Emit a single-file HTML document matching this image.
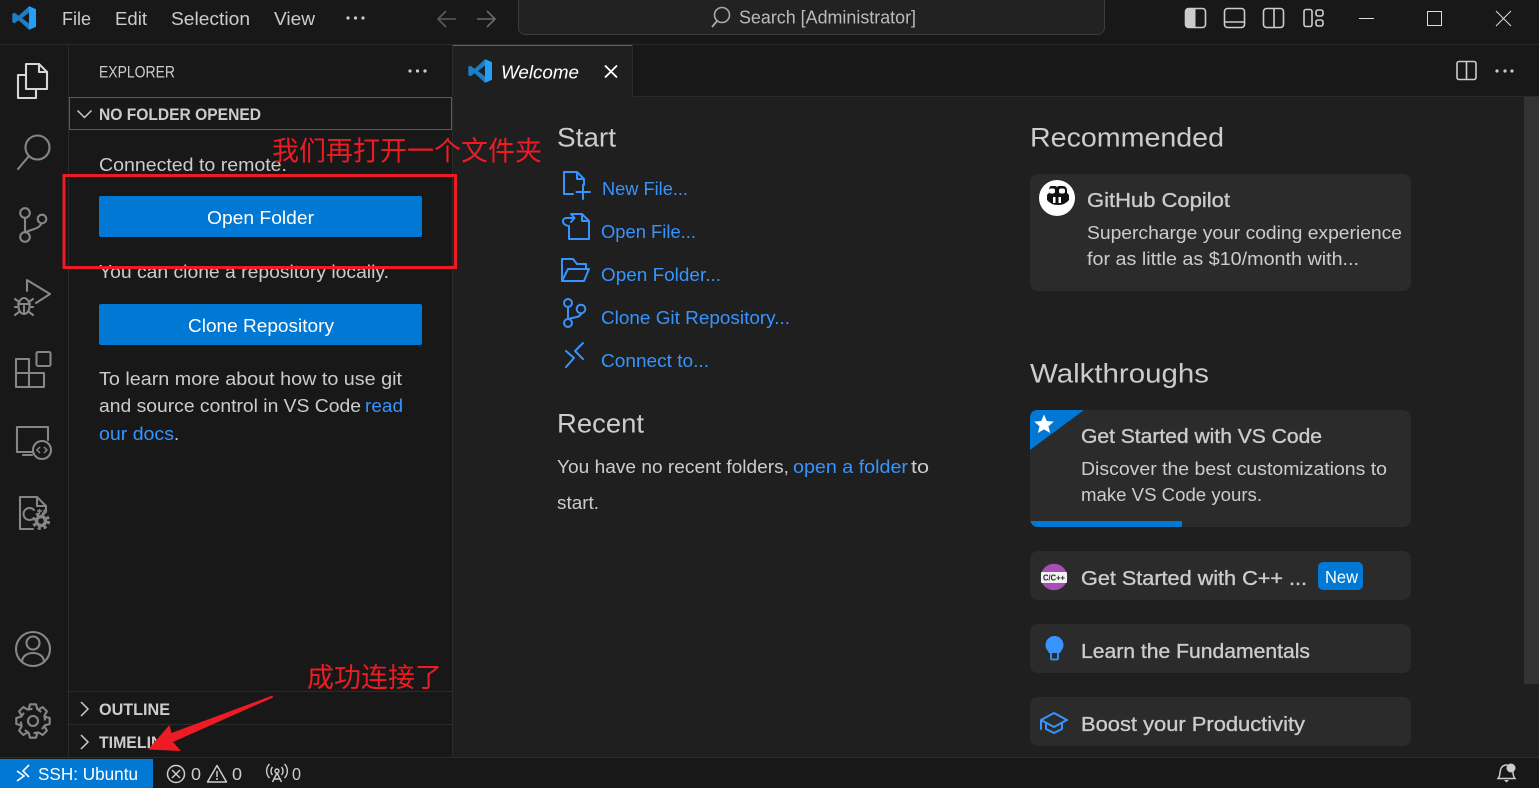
<!DOCTYPE html>
<html><head><meta charset="utf-8"><title>VS Code</title>
<style>
html,body{margin:0;padding:0;background:#181818;overflow:hidden}
svg{display:block}
text{font-family:"Liberation Sans","Noto Sans CJK SC",sans-serif;fill:#ccc;font-size:18.5px}
.t{font-size:18.5px;fill:#ccc}
.l{fill:#3794ff}
.h{font-size:27px;fill:#ccc}
.b{font-weight:bold;font-size:16.5px;fill:#ccc}
.s{font-size:20.5px;fill:#ccc;stroke:#ccc;stroke-width:.35}
.st{font-size:17.5px;fill:#ccc}
.a{stroke:#868686;stroke-width:2.1;fill:none;stroke-linejoin:round;stroke-linecap:round}
.w{stroke:#3794ff;stroke-width:2;fill:none;stroke-linejoin:round;stroke-linecap:round}
.z{font-size:27px;fill:#ed1c24;font-family:"Liberation Sans","Noto Sans CJK SC",sans-serif}
</style></head><body>
<svg xmlns="http://www.w3.org/2000/svg" width="1539" height="788" viewBox="0 0 1539 788">
<rect width="1539" height="788" fill="#181818"/>
<!-- editor -->
<rect x="453" y="97" width="1086" height="660" fill="#1f1f1f"/>
<rect x="1524" y="97" width="15" height="587" fill="#333"/>
<!-- lines -->
<rect x="0" y="44" width="1539" height="1" fill="#2b2b2b"/>
<rect x="68" y="45" width="1" height="712" fill="#2b2b2b"/>
<rect x="452" y="45" width="1" height="712" fill="#2b2b2b"/>
<rect x="453" y="96" width="1086" height="1" fill="#2b2b2b"/>
<rect x="0" y="757" width="1539" height="1" fill="#2b2b2b"/>
<rect x="69" y="691" width="383" height="1" fill="#2b2b2b"/>
<rect x="69" y="724" width="383" height="1" fill="#2b2b2b"/>

<!-- title logo -->
<g transform="translate(12,6)">
<path fill="#1a7fc8" d="M17 .3 6.600 9.800 2.400 6.600 .3 7.900v8.200l2.100 1.300 4.200-3.200L17 23.700l7-3V3.300zM17 6.600v10.800L10 12z" fill-rule="evenodd"/>
<path fill="#22a0f5" d="M17 .3l7 3V20.700l-7 3V17.400L17 6.600z"/>
</g>
<text x="62" y="25" textLength="29" lengthAdjust="spacingAndGlyphs">File</text>
<text x="115" y="25" textLength="32" lengthAdjust="spacingAndGlyphs">Edit</text>
<text x="171" y="25" textLength="79" lengthAdjust="spacingAndGlyphs">Selection</text>
<text x="274" y="25" textLength="41" lengthAdjust="spacingAndGlyphs">View</text>
<g fill="#ccc"><circle cx="348" cy="18" r="1.6"/><circle cx="355.500" cy="18" r="1.6"/><circle cx="363" cy="18" r="1.6"/></g>
<path d="M456 19H439M446 11l-8 8 8 8" stroke="#5a5a5a" stroke-width="1.6" fill="none"/>
<path d="M477 19H494M487 11l8 8-8 8" stroke="#6a6a6a" stroke-width="1.6" fill="none"/>
<rect x="518.500" y="-6" width="586" height="40.500" rx="7" fill="#222" stroke="#3c3c3c"/>
<circle cx="722" cy="15" r="7.500" fill="none" stroke="#aaa" stroke-width="1.600"/>
<path d="M717 21 712 27" stroke="#aaa" stroke-width="1.800"/>
<text x="739" y="23.500" textLength="177" lengthAdjust="spacingAndGlyphs" style="fill:#bbb">Search [Administrator]</text>
<!-- layout controls -->
<g fill="none" stroke="#ccc" stroke-width="1.600">
<rect x="1185.500" y="8.500" width="20" height="19" rx="3"/>
<rect x="1224.500" y="8.500" width="20" height="19" rx="3"/><path d="M1225 22h19"/>
<rect x="1263.500" y="8.500" width="20" height="19" rx="3"/><path d="M1274 9v18"/>
<rect x="1304" y="9.500" width="8" height="17" rx="2"/><rect x="1316" y="10" width="7" height="6" rx="2"/><rect x="1316" y="20" width="7" height="6" rx="2"/>
</g>
<path d="M1186 11q0-2 2-2h7.500v18H1188q-2 0-2-2z" fill="#ccc"/>
<path d="M1359 18.500h15" stroke="#ddd"/>
<rect x="1427.500" y="11.500" width="14" height="14" fill="none" stroke="#ddd"/>
<path d="M1496 11l15 15M1511 11l-15 15" stroke="#ddd" fill="none"/>

<!-- activity bar -->
<g class="a" style="stroke:#d7d7d7">
<path d="M26 75H18V98H36V89"/><path d="M26 64H39L47 72V89H26Z"/><path d="M39 64V72H47"/>
</g>
<g class="a">
<circle cx="37.500" cy="147.500" r="12"/><path d="M29 156 18 169"/>
<circle cx="25" cy="213" r="4.800"/><circle cx="42" cy="219" r="4.300"/><circle cx="25" cy="237" r="4.800"/><path d="M25 218V232M41 224C39 229 32 229 26 232"/>
<path d="M27 291V280L50 294 36 303"/>
<ellipse cx="24" cy="306" rx="5.500" ry="8"/><path d="M18 304H30M24 306V314M15 299l4 3M33 299l-4 3M15 307h3M33 307h-3M15 315l4-3M33 315l-4-3"/>
<rect x="36.500" y="352" width="14" height="14" rx="1.500"/><path d="M16 359H29V373H44V387H16ZM16 373H29V387"/>
<path d="M33 452H17V427H48V440"/><path d="M23 455H32"/><circle cx="42" cy="450" r="9"/>
<path d="M20 497H37L46 506V512M33 529H20V497" /><path d="M37 497V506H46"/>
<path d="M34 510a6 6 0 1 0 0 8" stroke-width="2"/>
<circle cx="33" cy="649" r="17"/><circle cx="33" cy="643" r="6.500"/><path d="M22 662C22 650 44 650 44 662"/>
</g>
<path d="M40 447l-3 3 3 3M44 447l3 3-3 3" stroke="#868686" stroke-width="1.500" fill="none"/>
<path d="M37 511h5M39.500 509v5M43 511h4M45 509v5" stroke="#868686" stroke-width="1.400"/>
<circle cx="41" cy="521" r="4.500" fill="none" stroke="#868686" stroke-width="3.500"/>
<circle cx="41" cy="521" r="7.500" fill="none" stroke="#868686" stroke-width="3" stroke-dasharray="3 3"/>
<g fill="none" stroke="#868686" stroke-width="2.100" stroke-linejoin="round" transform="translate(33,721)">
<circle r="5"/>
<path d="M-4.300-11.800-3-16.700H3L4.300-11.800 8.200-9"/>
<path transform="rotate(45)" d="M-4.300-11.800-3-16.700H3L4.300-11.800 8.200-9"/>
<path transform="rotate(90)" d="M-4.300-11.800-3-16.700H3L4.300-11.800 8.200-9"/>
<path transform="rotate(135)" d="M-4.300-11.800-3-16.700H3L4.300-11.800 8.200-9"/>
<path transform="rotate(180)" d="M-4.300-11.800-3-16.700H3L4.300-11.800 8.200-9"/>
<path transform="rotate(225)" d="M-4.300-11.800-3-16.700H3L4.300-11.800 8.200-9"/>
<path transform="rotate(270)" d="M-4.300-11.800-3-16.700H3L4.300-11.800 8.200-9"/>
<path transform="rotate(315)" d="M-4.300-11.800-3-16.700H3L4.300-11.800 8.200-9"/>
</g>

<!-- sidebar -->
<text x="99" y="77.500" textLength="76" lengthAdjust="spacingAndGlyphs" style="font-size:17px">EXPLORER</text>
<g fill="#ccc"><circle cx="410" cy="71" r="1.600"/><circle cx="417.500" cy="71" r="1.600"/><circle cx="425" cy="71" r="1.600"/></g>
<rect x="69.500" y="97.500" width="382" height="32" fill="none" stroke="#1a6ea8"/>
<path d="M77.500 110.500l7 7 7-7" fill="none" stroke="#ccc" stroke-width="1.500"/>
<text class="b" x="99" y="120" textLength="162" lengthAdjust="spacingAndGlyphs">NO FOLDER OPENED</text>
<text class="t" x="99" y="171" textLength="188" lengthAdjust="spacingAndGlyphs">Connected to remote.</text>
<rect x="99" y="196" width="323" height="41" rx="2" fill="#0078d4"/>
<text x="207" y="224" textLength="107" lengthAdjust="spacingAndGlyphs" style="fill:#fff">Open Folder</text>
<text class="t" x="99" y="278" textLength="290" lengthAdjust="spacingAndGlyphs">You can clone a repository locally.</text>
<rect x="99" y="304" width="323" height="41" rx="2" fill="#0078d4"/>
<text x="188" y="332" textLength="146" lengthAdjust="spacingAndGlyphs" style="fill:#fff">Clone Repository</text>
<text class="t" x="99" y="385" textLength="303" lengthAdjust="spacingAndGlyphs">To learn more about how to use git</text>
<text class="t" x="99" y="412" textLength="262" lengthAdjust="spacingAndGlyphs">and source control in VS Code</text>
<text x="365" y="412" textLength="38" lengthAdjust="spacingAndGlyphs" style="fill:#3794ff">read</text>
<text x="99" y="440" textLength="75" lengthAdjust="spacingAndGlyphs" style="fill:#3794ff">our docs</text>
<text class="t" x="174" y="440">.</text>
<path d="M81 702l7 7-7 7M81 735l7 7-7 7" fill="none" stroke="#ccc" stroke-width="1.500"/>
<text class="b" x="99" y="715" textLength="71" lengthAdjust="spacingAndGlyphs">OUTLINE</text>
<text class="b" x="99" y="748" textLength="74" lengthAdjust="spacingAndGlyphs">TIMELINE</text>

<!-- tab -->
<rect x="453" y="45" width="180" height="52" fill="#1f1f1f"/>
<rect x="453" y="45" width="180" height="1" fill="#0078d4"/>
<rect x="632" y="45" width="1" height="51" fill="#2b2b2b"/>
<g transform="translate(468,59)">
<path fill="#1a7fc8" d="M17 .3 6.600 9.800 2.400 6.600 .3 7.900v8.200l2.100 1.300 4.200-3.200L17 23.700l7-3V3.300zM17 6.600v10.800L10 12z" fill-rule="evenodd"/>
<path fill="#22a0f5" d="M17 .3l7 3V20.700l-7 3V6.600z"/>
</g>
<text x="501" y="78.500" textLength="78" lengthAdjust="spacingAndGlyphs" font-style="italic" style="fill:#fff">Welcome</text>
<path d="M605 65.500l12 12M617 65.500l-12 12" stroke="#fff" stroke-width="1.800"/>
<rect x="1457" y="61.500" width="19" height="18" rx="2" fill="none" stroke="#ccc" stroke-width="1.600"/><path d="M1466.500 62v17" stroke="#ccc" stroke-width="1.600"/>
<g fill="#ccc"><circle cx="1497" cy="71" r="1.600"/><circle cx="1505" cy="71" r="1.600"/><circle cx="1512" cy="71" r="1.600"/></g>

<!-- welcome left -->
<text class="h" x="557" y="146.500" textLength="59" lengthAdjust="spacingAndGlyphs">Start</text>
<g class="w">
<path d="M573 194H564V172H577L584 179V185M577 172V179H584M576.500 192H590M583 185V199"/>
<path d="M572 214H582L589 221V239H569V227M582 214V221H589M569 226C562 225 561 219 566 218H574M571 214l3.500 4-3.500 4"/>
<path d="M562 281V259H573L577 264H586V269M562 281H584L589 269H568Z"/>
<circle cx="568" cy="303" r="4"/><circle cx="581" cy="309" r="4.300"/><circle cx="568" cy="323" r="4"/><path d="M568 307V319M581 314C579 318 573 317 569 319"/>
<path d="M566 351 574 358 566 367M583 343 575 351 583 359"/>
</g>
<text x="602" y="195" textLength="86" lengthAdjust="spacingAndGlyphs" style="fill:#3794ff">New File...</text>
<text x="601" y="238" textLength="95" lengthAdjust="spacingAndGlyphs" style="fill:#3794ff">Open File...</text>
<text x="601" y="281" textLength="120" lengthAdjust="spacingAndGlyphs" style="fill:#3794ff">Open Folder...</text>
<text x="601" y="324" textLength="189" lengthAdjust="spacingAndGlyphs" style="fill:#3794ff">Clone Git Repository...</text>
<text x="601" y="367" textLength="108" lengthAdjust="spacingAndGlyphs" style="fill:#3794ff">Connect to...</text>
<text class="h" x="557" y="432.500" textLength="87" lengthAdjust="spacingAndGlyphs">Recent</text>
<text class="t" x="557" y="473" textLength="232" lengthAdjust="spacingAndGlyphs">You have no recent folders,</text>
<text x="793" y="473" textLength="115" lengthAdjust="spacingAndGlyphs" style="fill:#3794ff">open a folder</text>
<text class="t" x="911" y="473" textLength="18" lengthAdjust="spacingAndGlyphs">to</text>
<text class="t" x="557" y="509" textLength="42" lengthAdjust="spacingAndGlyphs">start.</text>

<!-- right column -->
<text class="h" x="1030" y="146.500" textLength="194" lengthAdjust="spacingAndGlyphs">Recommended</text>
<rect x="1030" y="174" width="381" height="117" rx="8" fill="#2b2b2b"/>
<circle cx="1057" cy="198" r="18" fill="#fff"/>
<path fill="#111" d="M1051 186h4q2 0 2 2 0-2 2-2h4q4 0 4 5v2q2 1 2 3v4q-4 5-11 5t-11-5v-4q0-2 2-3v-2q0-5 2-5z"/>
<rect x="1049" y="188.500" width="6" height="5" rx="2" fill="#fff"/><rect x="1059" y="188.500" width="6" height="5" rx="2" fill="#fff"/>
<rect x="1053" y="197" width="2.500" height="6" fill="#fff"/><rect x="1058.500" y="197" width="2.500" height="6" fill="#fff"/>
<text class="s" x="1087" y="207" textLength="143" lengthAdjust="spacingAndGlyphs">GitHub Copilot</text>
<text class="t" x="1087" y="239" textLength="315" lengthAdjust="spacingAndGlyphs">Supercharge your coding experience</text>
<text class="t" x="1087" y="265" textLength="272" lengthAdjust="spacingAndGlyphs">for as little as $10/month with...</text>

<text class="h" x="1030" y="382.500" textLength="179" lengthAdjust="spacingAndGlyphs">Walkthroughs</text>
<rect x="1030" y="410" width="381" height="117" rx="8" fill="#2b2b2b"/>
<path d="M1030 450V418q0-8 8-8h46Z" fill="#0078d4"/>
<path d="M1030.500 521h151.500v6h-144q-6 0-7.500-6z" fill="#0078d4"/>
<path d="M1044 414.500l2.800 6.500 7 .6-5.300 4.600 1.600 6.800-6.100-3.600-6.100 3.600 1.600-6.800-5.300-4.600 7-.6z" fill="#fff"/>
<text class="s" x="1081" y="443" textLength="241" lengthAdjust="spacingAndGlyphs">Get Started with VS Code</text>
<text class="t" x="1081" y="475" textLength="306" lengthAdjust="spacingAndGlyphs">Discover the best customizations to</text>
<text class="t" x="1081" y="501" textLength="181" lengthAdjust="spacingAndGlyphs">make VS Code yours.</text>

<rect x="1030" y="551" width="381" height="49" rx="8" fill="#2b2b2b"/>
<circle cx="1054" cy="577" r="13.300" fill="#a74db5"/>
<rect x="1041" y="572" width="26" height="11" rx="1" fill="#f2f2f2"/>
<text x="1043" y="580.500" textLength="22" lengthAdjust="spacingAndGlyphs" style="font-size:8.500px;font-weight:bold;fill:#222">C/C++</text>
<text class="s" x="1081" y="585" textLength="226" lengthAdjust="spacingAndGlyphs">Get Started with C++ ...</text>
<rect x="1318" y="562" width="45" height="28" rx="5" fill="#0078d4"/>
<text x="1325" y="583" textLength="33" lengthAdjust="spacingAndGlyphs" style="fill:#fff;font-size:17.500px">New</text>

<rect x="1030" y="624" width="381" height="49" rx="8" fill="#2b2b2b"/>
<path d="M1054.500 636a9 9 0 0 1 9 9c0 4-2.500 5.500-3.500 8h-11c-1-2.500-3.500-4-3.500-8a9 9 0 0 1 9-9z" fill="#3794ff"/>
<path d="M1051 653v5.500q0 1 1 1h5q1 0 1-1V653" fill="none" stroke="#3794ff" stroke-width="1.800"/>
<text class="s" x="1081" y="658" textLength="229" lengthAdjust="spacingAndGlyphs">Learn the Fundamentals</text>

<rect x="1030" y="697" width="381" height="49" rx="8" fill="#2b2b2b"/>
<path class="w" d="M1041 720 1054 713 1067 720 1054 727ZM1041 720V729M1046 723V729L1054 733 1062 729V723"/>
<text class="s" x="1081" y="731" textLength="224" lengthAdjust="spacingAndGlyphs">Boost your Productivity</text>

<!-- status bar -->
<rect x="0" y="759" width="153" height="29" fill="#0078d4"/>
<path d="M17 771 24 776 17 781M29 765 23 771 29 777" fill="none" stroke="#fff" stroke-width="1.600"/>
<text x="38" y="780" textLength="100" lengthAdjust="spacingAndGlyphs" style="fill:#fff;font-size:17.500px">SSH: Ubuntu</text>
<circle cx="176" cy="774" r="8.500" fill="none" stroke="#ccc" stroke-width="1.500"/>
<path d="M172 770l8 8M180 770l-8 8" stroke="#ccc" stroke-width="1.500"/>
<text class="st" x="191" y="780" textLength="10" lengthAdjust="spacingAndGlyphs">0</text>
<path d="M217 765.500 226.500 782H207.500Z" fill="none" stroke="#ccc" stroke-width="1.500" stroke-linejoin="round"/>
<path d="M217 771v6M217 778v2" stroke="#ccc" stroke-width="1.500"/>
<text class="st" x="232" y="780" textLength="10" lengthAdjust="spacingAndGlyphs">0</text>
<g fill="none" stroke="#ccc" stroke-width="1.400">
<circle cx="277" cy="771" r="2"/><path d="M277 773 272.500 782M277 773 281.500 782M273.500 779H280.500"/>
<path d="M272.500 775a6 6 0 0 1 0-8M281.500 767a6 6 0 0 1 0 8M269.500 778a10 10 0 0 1 0-14M284.500 764a10 10 0 0 1 0 14"/>
</g>
<text class="st" x="292" y="780" textLength="9" lengthAdjust="spacingAndGlyphs">0</text>
<path d="M1499 777c1-2 1-5 1.500-7 .6-3 3-5 6-5s5.500 2 6 5c.5 2 .5 5 1.500 7l1 1.500h-17Z" fill="none" stroke="#ccc" stroke-width="1.500"/>
<path d="M1504 780h5l-2.500 2.500z" fill="#ccc"/>
<circle cx="1511" cy="768" r="4.500" fill="#ccc"/>

<!-- annotations -->
<rect x="64" y="175.500" width="391.500" height="92" fill="none" stroke="#ed1c24" stroke-width="3"/>
<text class="z" x="272" y="160.500" textLength="270">我们再打开一个文件夹</text>
<text class="z" x="307" y="687" textLength="135">成功连接了</text>
<path d="M272.500 695.500 171.500 733 169.500 725 148 749.500 181 751 173 742 273 697.500Z" fill="#ed1c24"/>
</svg>
</body></html>
